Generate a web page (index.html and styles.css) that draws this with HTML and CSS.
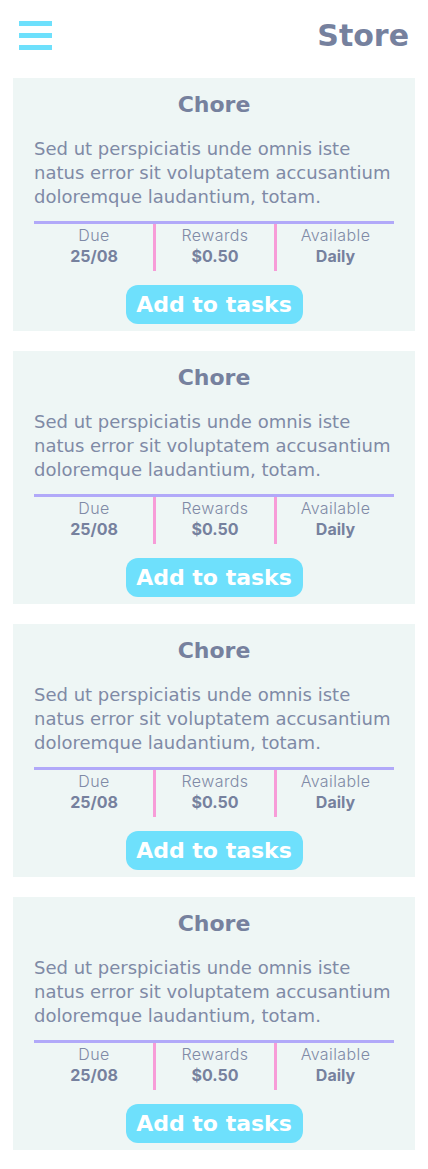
FILE: index.html
```html
<!DOCTYPE html>
<html lang="en">
<head>
<meta charset="utf-8">
<title>Store</title>
<link rel="stylesheet" href="styles.css">
</head>
<body>
<header class="topbar">
  <button class="menu" aria-label="Menu">
    <span class="bar"></span><span class="bar"></span><span class="bar"></span>
  </button>
  <h1 class="page-title">Store</h1>
</header>
<main class="list">
  <section class="card">
    <h2 class="card-title">Chore</h2>
    <p class="card-desc">Sed ut perspiciatis unde omnis iste natus error sit voluptatem accusantium doloremque laudantium, totam.</p>
    <div class="stats">
      <div class="stat"><span class="label">Due</span><span class="value">25/08</span></div>
      <div class="stat"><span class="label">Rewards</span><span class="value">$0.50</span></div>
      <div class="stat"><span class="label">Available</span><span class="value">Daily</span></div>
    </div>
    <button class="add">Add to tasks</button>
  </section>
  <section class="card">
    <h2 class="card-title">Chore</h2>
    <p class="card-desc">Sed ut perspiciatis unde omnis iste natus error sit voluptatem accusantium doloremque laudantium, totam.</p>
    <div class="stats">
      <div class="stat"><span class="label">Due</span><span class="value">25/08</span></div>
      <div class="stat"><span class="label">Rewards</span><span class="value">$0.50</span></div>
      <div class="stat"><span class="label">Available</span><span class="value">Daily</span></div>
    </div>
    <button class="add">Add to tasks</button>
  </section>
  <section class="card">
    <h2 class="card-title">Chore</h2>
    <p class="card-desc">Sed ut perspiciatis unde omnis iste natus error sit voluptatem accusantium doloremque laudantium, totam.</p>
    <div class="stats">
      <div class="stat"><span class="label">Due</span><span class="value">25/08</span></div>
      <div class="stat"><span class="label">Rewards</span><span class="value">$0.50</span></div>
      <div class="stat"><span class="label">Available</span><span class="value">Daily</span></div>
    </div>
    <button class="add">Add to tasks</button>
  </section>
  <section class="card">
    <h2 class="card-title">Chore</h2>
    <p class="card-desc">Sed ut perspiciatis unde omnis iste natus error sit voluptatem accusantium doloremque laudantium, totam.</p>
    <div class="stats">
      <div class="stat"><span class="label">Due</span><span class="value">25/08</span></div>
      <div class="stat"><span class="label">Rewards</span><span class="value">$0.50</span></div>
      <div class="stat"><span class="label">Available</span><span class="value">Daily</span></div>
    </div>
    <button class="add">Add to tasks</button>
  </section>
</main>
</body>
</html>
```
FILE: styles.css
```css
* { box-sizing: border-box; }
html, body { margin: 0; padding: 0; background: #ffffff; }
body {
  font-family: "DejaVu Sans", Inter, sans-serif;
  color: #77829f;
  width: 428px;
}
.topbar {
  display: flex;
  justify-content: space-between;
  align-items: center;
  height: 78px;
  padding: 0 19px 8px 19px;
}
.menu {
  display: flex;
  flex-direction: column;
  gap: 7px;
  padding: 0;
  margin: 0;
  border: 0;
  background: none;
  width: 33px;
}
.bar {
  display: block;
  width: 33px;
  height: 5px;
  background: #6ee0fc;
}
.page-title {
  margin: 0;
  font-size: 30px;
  font-weight: 700;
  color: #76819e;
}
.list {
  display: flex;
  flex-direction: column;
  gap: 20px;
  padding: 0 13px;
}
.card {
  background: #eef6f5;
  height: 253px;
  padding: 11px 21px 0 21px;
  display: flex;
  flex-direction: column;
  align-items: center;
}
.card-title {
  margin: 0;
  font-size: 22px;
  line-height: 31px;
  font-weight: 700;
  color: #76819e;
}
.card-desc {
  margin: 17px 0 0 0;
  font-size: 18px;
  line-height: 24px;
  font-weight: 400;
  color: #7f8aa6;
  align-self: stretch;
}
.stats {
  align-self: stretch;
  margin-top: 12px;
  border-top: 3px solid #b1a9f9;
  display: grid;
  grid-template-columns: 1fr 1fr 1fr;
  height: 50px;
}
.stat {
  display: flex;
  flex-direction: column;
  align-items: center;
  padding-top: 1px;
}
.stat + .stat { border-left: 3px solid #f79cd8; }
.stat:nth-child(2) { margin-left: -1px; }
.label {
  font-family: Inter, "DejaVu Sans", sans-serif;
  font-size: 16px;
  line-height: 20px;
  font-weight: 300;
  letter-spacing: 0.4px;
  color: #7f8aa6;
}
.value {
  font-family: Inter, "DejaVu Sans", sans-serif;
  font-size: 16px;
  line-height: 22px;
  font-weight: 700;
  color: #76819e;
}
.add {
  margin-top: 14px;
  width: 177px;
  height: 39px;
  border: 0;
  border-radius: 12px;
  background: #6ee0fc;
  color: #ffffff;
  font-family: inherit;
  font-size: 22px;
  font-weight: 700;
  padding: 0;
}
```
